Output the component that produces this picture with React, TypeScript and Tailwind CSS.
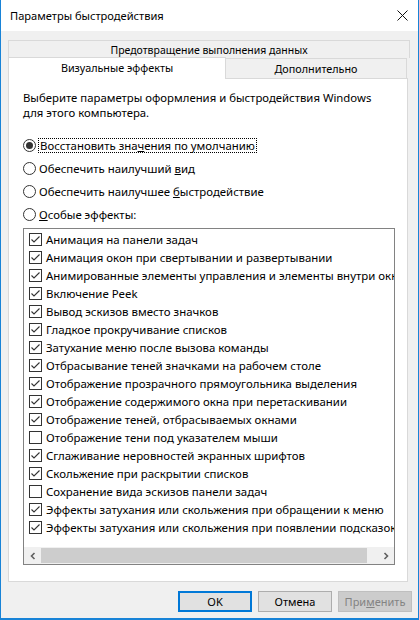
import React from 'react'

// Список визуальных эффектов: [текст, отмечен]
const EFFECTS: [string, boolean][] = [
  ['Анимация на панели задач', true],
  ['Анимация окон при свертывании и развертывании', true],
  ['Анимированные элементы управления и элементы внутри окна', true],
  ['Включение Peek', true],
  ['Вывод эскизов вместо значков', true],
  ['Гладкое прокручивание списков', true],
  ['Затухание меню после вызова команды', true],
  ['Отбрасывание теней значками на рабочем столе', true],
  ['Отображение прозрачного прямоугольника выделения', true],
  ['Отображение содержимого окна при перетаскивании', true],
  ['Отображение теней, отбрасываемых окнами', true],
  ['Отображение тени под указателем мыши', false],
  ['Сглаживание неровностей экранных шрифтов', true],
  ['Скольжение при раскрытии списков', true],
  ['Сохранение вида эскизов панели задач', false],
  ['Эффекты затухания или скольжения при обращении к меню', true],
  ['Эффекты затухания или скольжения при появлении подсказок', true],
]

function CheckBox({ checked }: { checked: boolean }) {
  return (
    <div className="w-[13px] h-[13px] shrink-0 border border-[#333] bg-white flex items-center justify-center">
      {checked && (
        <svg width="11" height="11" viewBox="0 0 11 11">
          <polyline points="1.5,5.5 4,8 9.5,2.5" fill="none" stroke="#333" strokeWidth="1.1" />
        </svg>
      )}
    </div>
  )
}

function Radio({ on }: { on?: boolean }) {
  return (
    <div className="w-[13px] h-[13px] shrink-0 rounded-full border border-[#333] bg-white flex items-center justify-center">
      {on && <div className="w-[7px] h-[7px] rounded-full bg-[#333]" />}
    </div>
  )
}

function Btn({ children, primary, disabled }: { children: React.ReactNode; primary?: boolean; disabled?: boolean }) {
  const cls = primary
    ? 'border-2 border-[#0078d7] bg-[#e1e1e1] text-black'
    : disabled
      ? 'border border-[#bfbfbf] bg-[#cccccc] text-[#838383]'
      : 'border border-[#adadad] bg-[#e1e1e1] text-black'
  return <div className={`w-[74px] h-[21px] flex items-center justify-center text-[11px] ${cls}`}>{children}</div>
}

export default function App() {
  return (
    <div className="w-[419px] h-[620px] flex flex-col border-x border-b-2 border-[#1883d7] bg-[#f0f0f0] text-[12px] leading-[15px] text-black font-['Noto_Sans',sans-serif] overflow-hidden">
      {/* заголовок */}
      <div className="h-[31px] shrink-0 bg-white flex items-center pl-[9px] pr-[10px] text-[11.1px]">
        <span className="flex-1">Параметры быстродействия</span>
        <svg width="11" height="11" viewBox="0 0 11 11">
          <path d="M0.5 0.5 L10.5 10.5 M10.5 0.5 L0.5 10.5" stroke="#111" strokeWidth="1" />
        </svg>
      </div>

      {/* вкладки */}
      <div className="mt-[9px] ml-[7px] w-[402px] h-[18px] pt-[2px] border border-b-0 border-[#d9d9d9] flex items-center justify-center text-[10.5px]">
        Предотвращение выполнения данных
      </div>
      <div className="flex items-end ml-[7px] -mt-px relative z-10 text-[10.8px]">
        <div className="w-[218px] h-[22px] -mb-px pb-[2px] bg-white border border-b-0 border-[#d9d9d9] flex items-center justify-center">
          Визуальные эффекты
        </div>
        <div className="w-[181px] h-[20px] border border-l-0 border-b-0 border-[#d9d9d9] flex items-center justify-center">
          Дополнительно
        </div>
      </div>

      {/* панель */}
      <div className="ml-[7px] w-[400px] h-[504px] bg-white border border-[#d9d9d9] pl-[14px] pt-[11px] flex flex-col">
        <p className="text-[11.35px]">
          Выберите параметры оформления и быстродействия Windows
          <br />
          для этого компьютера.
        </p>
        <div className="mt-[14px] flex flex-col text-[11.4px]">
          <div className="h-[23px] flex items-center gap-[2px]">
            <Radio on />
            <span className="border border-dotted border-black px-px leading-[13px]">
              Восстановить зна<u>ч</u>ения по умолчанию
            </span>
          </div>
          <div className="h-[23px] flex items-center gap-[3px]">
            <Radio />
            <span>Обеспечить наилучший <u>в</u>ид</span>
          </div>
          <div className="h-[22px] flex items-center gap-[3px]">
            <Radio />
            <span>Обеспечить наилучшее <u>б</u>ыстродействие</span>
          </div>
          <div className="h-[24px] flex items-center gap-[3px]">
            <Radio />
            <span><u>О</u>собые эффекты:</span>
          </div>
        </div>

        {/* список эффектов */}
        <div className="mt-[2px] w-[372px] h-[337px] border border-[#828282] flex flex-col overflow-hidden">
          <div className="pt-px pl-[5px] flex flex-col text-[11.45px]">
            {EFFECTS.map(([label, checked], i) => (
              <div key={i} className="h-[18px] flex items-center gap-[4px] whitespace-nowrap">
                <CheckBox checked={checked} />
                <span>{label}</span>
              </div>
            ))}
          </div>
          <div className="flex-1" />
          <div className="h-[17px] shrink-0 bg-[#f0f0f0] flex items-stretch">
            <div className="w-[17px] flex items-center justify-center">
              <svg width="8" height="8" viewBox="0 0 8 8">
                <polyline points="5.5,1 2.5,4 5.5,7" fill="none" stroke="#606060" strokeWidth="1.6" />
              </svg>
            </div>
            <div className="w-[326px] my-px bg-[#cdcdcd]" />
            <div className="flex-1" />
            <div className="w-[17px] flex items-center justify-center">
              <svg width="8" height="8" viewBox="0 0 8 8">
                <polyline points="2.5,1 5.5,4 2.5,7" fill="none" stroke="#606060" strokeWidth="1.6" />
              </svg>
            </div>
          </div>
        </div>
      </div>

      {/* кнопки */}
      <div className="mt-[9px] pr-[6px] flex justify-end gap-[6px]">
        <Btn primary>OK</Btn>
        <Btn>Отмена</Btn>
        <Btn disabled>
          При<u>м</u>енить
        </Btn>
      </div>
    </div>
  )
}
